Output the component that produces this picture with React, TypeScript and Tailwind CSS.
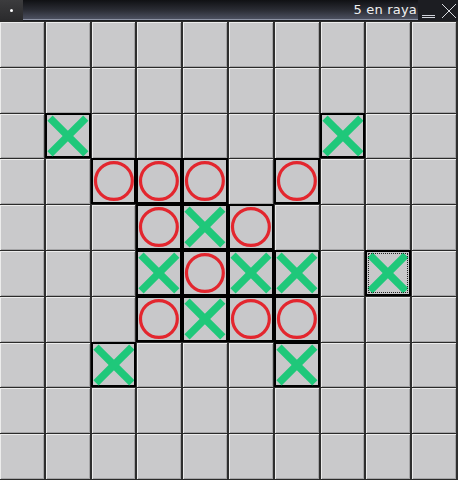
import React from "react";

type Mark = "X" | "O" | "";

const rows: string[] = [
  "..........",
  "..........",
  ".X.....X..",
  "..OOO.O...",
  "...OXO....",
  "...XOXX.X.",
  "...OXOO...",
  "..X...X...",
  "..........",
  "..........",
];

function XMark() {
  return (
    <svg viewBox="0 0 42 42" className="w-[42px] h-[42px]">
      <line x1="3" y1="3" x2="39" y2="39" stroke="#1fc87a" strokeWidth="7.5" strokeLinecap="butt" />
      <line x1="39" y1="3" x2="3" y2="39" stroke="#1fc87a" strokeWidth="7.5" strokeLinecap="butt" />
    </svg>
  );
}

function OMark() {
  return (
    <svg viewBox="0 0 42 42" className="w-[42px] h-[42px]">
      <circle cx="21" cy="21" r="18.5" fill="none" stroke="#e3262e" strokeWidth="3.2" />
    </svg>
  );
}

function Cell({ mark, focus }: { mark: Mark; focus?: boolean }) {
  if (mark === "") {
    return (
      <div className="bg-[#c9c9cb] border-r-2 border-b border-r-[#2e2e2e] border-b-[#2a2a2a] shadow-[inset_1px_1px_0_#ececec,inset_-1px_-1px_0_#a4a4a6]" />
    );
  }
  return (
    <div className="relative bg-[#c8c8ca] border-r-2 border-b border-r-[#2e2e2e] border-b-[#2a2a2a]">
      <div className="absolute -left-[1px] -top-[1px] -right-[1px] bottom-0 border-2 border-black flex items-center justify-center">
        {focus && <div className="absolute inset-[1px] border border-dotted border-[#222]" />}
        {mark === "X" ? <XMark /> : <OMark />}
      </div>
    </div>
  );
}

export default function App() {
  return (
    <div className="w-[458px] h-[480px] overflow-hidden bg-[#c9c9cb] flex flex-col" style={{ fontFamily: '"DejaVu Sans", sans-serif' }}>
      <div className="h-[21px] flex bg-[#1a1b1f]">
        <div className="w-[23px] h-full bg-[linear-gradient(#3c3c3e,#2a2a2c)] flex items-center justify-center">
          <div className="w-[3px] h-[3px] bg-white rounded-full" />
        </div>
        <div className="flex-1 h-[20px] bg-[linear-gradient(#101114,#2c2e36_55%,#4c5060)] border-b border-[#8d93a4] flex items-center justify-end pr-[1px]">
          <span className="text-[13px] text-[#f0f0f0] leading-none tracking-[0.2px]">5 en raya</span>
        </div>
        <div className="w-[40px] h-full flex items-center bg-[#1c1d22]">
          <div className="w-[13px] ml-[4px] mt-[12px] h-[3px] border-t border-b border-[#cfd2da]" />
          <svg viewBox="0 0 16 16" className="w-[16px] h-[16px] ml-[6px]">
            <line x1="1" y1="1" x2="15" y2="15" stroke="#d8dae0" strokeWidth="1" />
            <line x1="15" y1="1" x2="1" y2="15" stroke="#d8dae0" strokeWidth="1" />
          </svg>
        </div>
      </div>
      <div className="grid grid-cols-10 grid-rows-10 flex-1 border-t border-[#2a2a2a]">
        {rows.map((r, ri) =>
          r.split("").map((c, ci) => (
            <Cell
              key={`${ri}-${ci}`}
              mark={c === "X" ? "X" : c === "O" ? "O" : ""}
              focus={ri === 5 && ci === 8}
            />
          ))
        )}
      </div>
    </div>
  );
}
